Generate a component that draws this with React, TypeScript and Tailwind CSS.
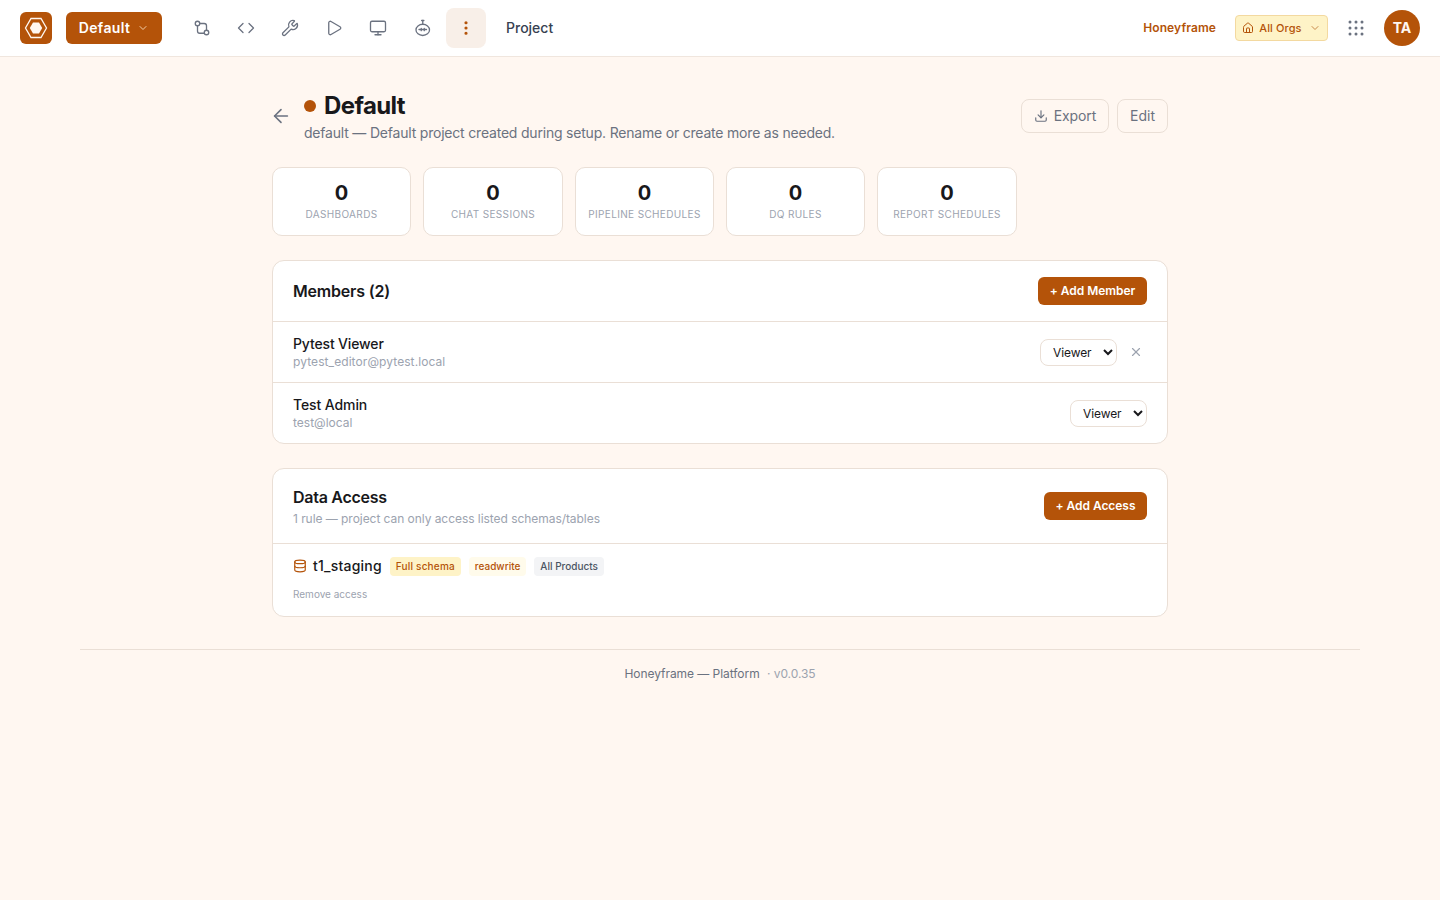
import React from "react";
import { ArrowLeft, ChevronDown, Code, Database, Download, EllipsisVertical, House, Monitor, Play, Wrench, X } from "lucide-react";

const stats = [
  { label: "DASHBOARDS", w: "w-[139px]" },
  { label: "CHAT SESSIONS", w: "w-[140px]" },
  { label: "PIPELINE SCHEDULES", w: "w-[139px]" },
  { label: "DQ RULES", w: "w-[139px]" },
  { label: "REPORT SCHEDULES", w: "w-[140px]" },
];

const RoleSelect = () => (
  <select defaultValue="viewer" className="h-[27px] w-[77px] rounded-lg border border-[#eadfd6] bg-white pl-2 pr-0.5 text-xs tracking-[-0.1px] text-[#18181b]">
    <option value="viewer">Viewer</option>
    <option value="admin">Admin</option>
  </select>
);

const BranchIcon = () => (
  <svg width="18" height="18" viewBox="0 0 24 24" fill="none" stroke="currentColor" strokeWidth="1.75" strokeLinecap="round" strokeLinejoin="round">
    <circle cx="6" cy="6" r="3" />
    <circle cx="18" cy="18" r="3" />
    <path d="M6 9v7a3 3 0 0 0 3 3h6" />
    <path d="M9 6h6a3 3 0 0 1 3 3v6" />
  </svg>
);

const BotIcon = () => (
  <svg width="18" height="18" viewBox="0 0 24 24" fill="none" stroke="currentColor" strokeWidth="1.75" strokeLinecap="round" strokeLinejoin="round">
    <path d="M11.5 2h3" />
    <path d="M13 2v5" />
    <ellipse cx="13" cy="14.5" rx="9" ry="7.5" />
    <path d="M8 14h10" />
    <path d="M11 12.5v3M15 12.5v3" />
  </svg>
);

const GridIcon = () => (
  <svg width="16" height="16" viewBox="0 0 16 16" fill="currentColor">
    {[2, 8, 14].map((y) =>
      [2, 8, 14].map((x) => <circle key={`${x}-${y}`} cx={x} cy={y} r="1.5" />)
    )}
  </svg>
);

const App: React.FC = () => {
  return (
    <div className="min-h-[900px] bg-[#fff7f1] font-['Inter',sans-serif] text-[#18181b]">
      <header className="flex h-[57px] items-center border-b border-[#f0e6de] bg-white px-5">
        <div className="flex h-8 w-8 items-center justify-center rounded-md bg-[#b45309]">
          <svg width="24" height="24" viewBox="0 0 24 24" fill="none">
            <path d="M7 2.5h10L22.5 12 17 21.5H7L1.5 12z" stroke="#fff7f1" strokeWidth="1.3" />
            <path d="M9 6.5h6l3.2 5.5L15 17.5H9L5.8 12z" fill="#fff7f1" />
          </svg>
        </div>
        <button className="ml-3.5 flex h-8 w-24 items-center justify-center gap-[7px] rounded-md bg-[#b45309] text-sm font-semibold tracking-[0.35px] text-white">
          Default
          <ChevronDown size={12} className="text-[#f3cfa8]" />
        </button>
        <nav className="ml-5 flex items-center gap-1 text-[#6b7280]">
          <button className="flex h-10 w-10 items-center justify-center"><BranchIcon /></button>
          <button className="flex h-10 w-10 items-center justify-center"><Code size={18} strokeWidth={1.75} /></button>
          <button className="flex h-10 w-10 items-center justify-center"><Wrench size={18} strokeWidth={1.75} /></button>
          <button className="flex h-10 w-10 items-center justify-center"><Play size={18} strokeWidth={1.75} /></button>
          <button className="flex h-10 w-10 items-center justify-center"><Monitor size={18} strokeWidth={1.75} /></button>
          <button className="flex h-10 w-10 items-center justify-center"><BotIcon /></button>
          <button className="flex h-10 w-10 items-center justify-center rounded-lg bg-[#f8efe8] text-[#b45309]"><EllipsisVertical size={18} strokeWidth={2.25} /></button>
        </nav>
        <span className="ml-5 text-sm font-medium text-[#374151]">Project</span>
        <div className="ml-auto flex items-center">
          <span className="text-xs font-semibold tracking-[0.1px] text-[#b45309]">Honeyframe</span>
          <button className="ml-[19px] flex h-[26px] w-[93px] items-center justify-center gap-[5px] rounded border border-[#f3d9a0] bg-[#fef3c7] text-[11px] font-medium tracking-[0.1px] text-[#b45309]">
            <House size={12} />
            All Orgs
            <ChevronDown size={12} className="ml-0.5 text-[#c98a4b]" />
          </button>
          <button className="ml-5 text-[#6b7280]"><GridIcon /></button>
          <div className="ml-5 flex h-9 w-9 items-center justify-center rounded-full bg-[#b45309] text-sm font-bold text-[#fff7f1]">TA</div>
        </div>
      </header>

      <main className="mx-auto w-[896px] pt-8">
        <div className="flex items-center justify-between">
          <div className="-ml-0.5 flex items-center gap-3">
            <ArrowLeft size={22} strokeWidth={1.75} className="text-[#6b7280]" />
            <div>
              <div className="mt-px flex items-center gap-2">
                <span className="h-3 w-3 rounded-full bg-[#b45309]" />
                <h1 className="text-2xl font-bold leading-8 tracking-[-0.6px]">Default</h1>
              </div>
              <p className="mt-px text-sm tracking-[-0.2px] text-[#6b7280]">default — Default project created during setup. Rename or create more as needed.</p>
            </div>
          </div>
          <div className="flex items-center gap-2">
            <button className="flex h-[34px] w-[88px] items-center justify-center gap-1.5 rounded-lg border border-[#eadfd6] text-sm tracking-[-0.1px] text-[#6b7280]">
              <Download size={14} />
              Export
            </button>
            <button className="h-[34px] w-[51px] rounded-lg border border-[#eadfd6] text-sm text-[#6b7280]">Edit</button>
          </div>
        </div>

        <div className="mt-6 flex gap-3">
          {stats.map((s) => (
            <div key={s.label} className={`${s.w} flex h-[69px] flex-col items-center rounded-[10px] border border-[#eadfd6] bg-white pt-[11px]`}>
              <div className="text-xl font-bold leading-7">0</div>
              <div className="text-[10px] leading-[14px] tracking-[0.35px] text-[#9ca3af]">{s.label}</div>
            </div>
          ))}
        </div>

        <section className="mt-6 rounded-xl border border-[#eadfd6] bg-white">
          <div className="flex h-[61px] items-center justify-between border-b border-[#eadfd6] px-5">
            <h2 className="text-base font-semibold tracking-[-0.2px]">Members (2)</h2>
            <button className="h-7 w-[109px] rounded-md bg-[#b45309] text-xs font-semibold tracking-[-0.05px] text-white">+ Add Member</button>
          </div>
          <div className="flex h-[61px] items-center justify-between border-b border-[#eadfd6] px-5">
            <div className="pt-0.5">
              <div className="text-sm font-medium leading-[18px] tracking-[-0.15px]">Pytest Viewer</div>
              <div className="text-xs leading-[18px] tracking-[0.08px] text-[#9ca3af]">pytest_editor@pytest.local</div>
            </div>
            <div className="flex items-center gap-3">
              <RoleSelect />
              <X size={14} className="mr-1 text-[#9ca3af]" />
            </div>
          </div>
          <div className="flex h-[60px] items-center justify-between px-5">
            <div className="pt-0.5">
              <div className="text-sm font-medium leading-[18px] tracking-[-0.1px]">Test Admin</div>
              <div className="text-xs leading-[18px] text-[#9ca3af]">test@local</div>
            </div>
            <RoleSelect />
          </div>
        </section>

        <section className="mt-6 rounded-xl border border-[#eadfd6] bg-white">
          <div className="flex h-[75px] items-center justify-between border-b border-[#eadfd6] px-5">
            <div className="pt-px">
              <h2 className="text-base font-semibold leading-6 tracking-[-0.27px]">Data Access</h2>
              <p className="mt-px text-xs leading-[18px] tracking-[-0.05px] text-[#9ca3af]">1 rule — project can only access listed schemas/tables</p>
            </div>
            <button className="h-7 w-[103px] rounded-md bg-[#b45309] text-xs font-semibold tracking-[-0.05px] text-white">+ Add Access</button>
          </div>
          <div className="px-5 pb-3.5 pt-3">
            <div className="flex items-center">
              <Database size={14} className="text-[#b45309]" />
              <span className="ml-1.5 text-sm font-medium tracking-[0.2px]">t1_staging</span>
              <span className="ml-2 rounded bg-[#fef3c7] px-1.5 py-0.5 text-[10px] font-medium leading-[15px] tracking-[0.2px] text-[#b45309]">Full schema</span>
              <span className="ml-2 rounded bg-[#fffbeb] px-1.5 py-0.5 text-[10px] font-medium leading-[15px] text-[#b45309]">readwrite</span>
              <span className="ml-2 rounded bg-[#f3f4f6] px-1.5 py-0.5 text-[10px] font-medium leading-[15px] text-[#4b5563]">All Products</span>
            </div>
            <button className="mt-[11px] block text-[10px] leading-[15px] text-[#9ca3af]">Remove access</button>
          </div>
        </section>
      </main>

      <footer className="mx-auto mt-8 w-[1280px] border-t border-[#eadfd6] pt-[15px] text-center text-xs leading-[18px] tracking-[-0.05px] text-[#6b7280]">
        Honeyframe — Platform <span className="ml-1 text-[#9ca3af]">· v0.0.35</span>
      </footer>
    </div>
  );
};

export default App;
